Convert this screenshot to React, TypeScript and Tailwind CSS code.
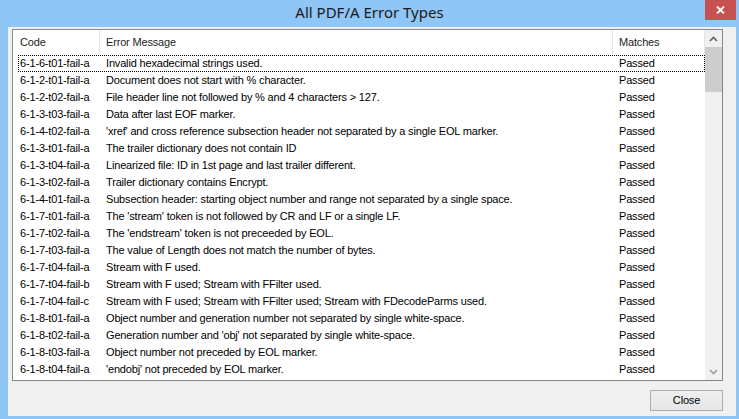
import React from 'react';

const rows = [
    ['6-1-6-t01-fail-a', 'Invalid hexadecimal strings used.'],
    ['6-1-2-t01-fail-a', 'Document does not start with % character.'],
    ['6-1-2-t02-fail-a', 'File header line not followed by % and 4 characters > 127.'],
    ['6-1-3-t03-fail-a', 'Data after last EOF marker.'],
    ['6-1-4-t02-fail-a', "'xref' and cross reference subsection header not separated by a single EOL marker."],
    ['6-1-3-t01-fail-a', 'The trailer dictionary does not contain ID'],
    ['6-1-3-t04-fail-a', 'Linearized file: ID in 1st page and last trailer different.'],
    ['6-1-3-t02-fail-a', 'Trailer dictionary contains Encrypt.'],
    ['6-1-4-t01-fail-a', 'Subsection header: starting object number and range not separated by a single space.'],
    ['6-1-7-t01-fail-a', "The 'stream' token is not followed by CR and LF or a single LF."],
    ['6-1-7-t02-fail-a', "The 'endstream' token is not preceeded by EOL."],
    ['6-1-7-t03-fail-a', 'The value of Length does not match the number of bytes.'],
    ['6-1-7-t04-fail-a', 'Stream with F used.'],
    ['6-1-7-t04-fail-b', 'Stream with F used; Stream with FFilter used.'],
    ['6-1-7-t04-fail-c', 'Stream with F used; Stream with FFilter used; Stream with FDecodeParms used.'],
    ['6-1-8-t01-fail-a', 'Object number and generation number not separated by single white-space.'],
    ['6-1-8-t02-fail-a', "Generation number and 'obj' not separated by single white-space."],
    ['6-1-8-t03-fail-a', 'Object number not preceded by EOL marker.'],
    ['6-1-8-t04-fail-a', "'endobj' not preceded by EOL marker."],
];

export default function App() {
    return (
        <div className="w-[739px] h-[419px] bg-[#8fc6f6] flex flex-col overflow-hidden">
            {/* title bar */}
            <div className="relative h-[27px] flex items-center justify-center shrink-0">
                <span className="text-[15px] text-[#1a1a1a] font-['Noto_Sans',sans-serif] leading-none -mt-[2px]">
                    All PDF/A Error Types
                </span>
                <div className="absolute right-[3px] top-0 w-[31px] h-[20px] bg-[#c75050] flex items-center justify-center">
                    <svg width="9" height="8" viewBox="0 0 9 8">
                        <path d="M1 0.5 L8 7.5 M8 0.5 L1 7.5" stroke="white" strokeWidth="1.8" />
                    </svg>
                </div>
            </div>

            {/* client area */}
            <div className="flex-1 ml-[8px] mr-[3px] mb-[3px] bg-[#f0f0f0] flex flex-col pl-[4px] pr-[13px] pt-[2px] font-['Liberation_Sans',Arial,sans-serif] text-[11px] tracking-[-0.17px] text-black">
                <div className="h-[352px] border border-[#828790] bg-white flex overflow-hidden">
                    <div className="flex-1 flex flex-col overflow-hidden">
                        <div className="h-[24px] grid grid-cols-[87px_513px_1fr] items-center shrink-0 text-[#1e1e1e]">
                            <div className="pl-[7px] h-full flex items-center border-r border-[#e5e5e5]">Code</div>
                            <div className="pl-[6px] h-full flex items-center border-r border-[#e5e5e5]">Error Message</div>
                            <div className="pl-[6px] h-full flex items-center border-r border-[#e5e5e5]">Matches</div>
                        </div>
                        <div className="pl-[5px] pt-[1px] flex flex-col">
                            {rows.map(([code, msg], i) => (
                                <div
                                    key={code}
                                    className={`h-[17px] grid grid-cols-[82px_513px_1fr] items-center whitespace-nowrap ${
                                        i === 0 ? 'outline outline-1 outline-dotted outline-black -outline-offset-1' : ''
                                    }`}
                                >
                                    <div className="pl-[2px]">{code}</div>
                                    <div className="pl-[6px] overflow-hidden">{msg}</div>
                                    <div className="pl-[6px]">Passed</div>
                                </div>
                            ))}
                        </div>
                    </div>
                    {/* scrollbar */}
                    <div className="w-[17px] bg-[#f0f0f0] flex flex-col items-center shrink-0">
                        <div className="h-[17px] w-full flex items-center justify-center">
                            <svg width="9" height="6" viewBox="0 0 9 6">
                                <path d="M1 5 L4.5 1.5 L8 5" stroke="#606060" strokeWidth="1.6" fill="none" />
                            </svg>
                        </div>
                        <div className="w-full h-[45px] bg-[#cdcdcd]" />
                        <div className="flex-1" />
                        <div className="h-[17px] w-full flex items-center justify-center">
                            <svg width="9" height="6" viewBox="0 0 9 6">
                                <path d="M1 1 L4.5 4.5 L8 1" stroke="#a0a0a0" strokeWidth="1.6" fill="none" />
                            </svg>
                        </div>
                    </div>
                </div>
                <div className="flex justify-end mt-[9px]">
                    <button className="w-[73px] h-[21px] border border-[#acacac] bg-gradient-to-b from-[#f0f0f0] to-[#e5e5e5] text-[11px] text-black">
                        Close
                    </button>
                </div>
            </div>
        </div>
    );
}
